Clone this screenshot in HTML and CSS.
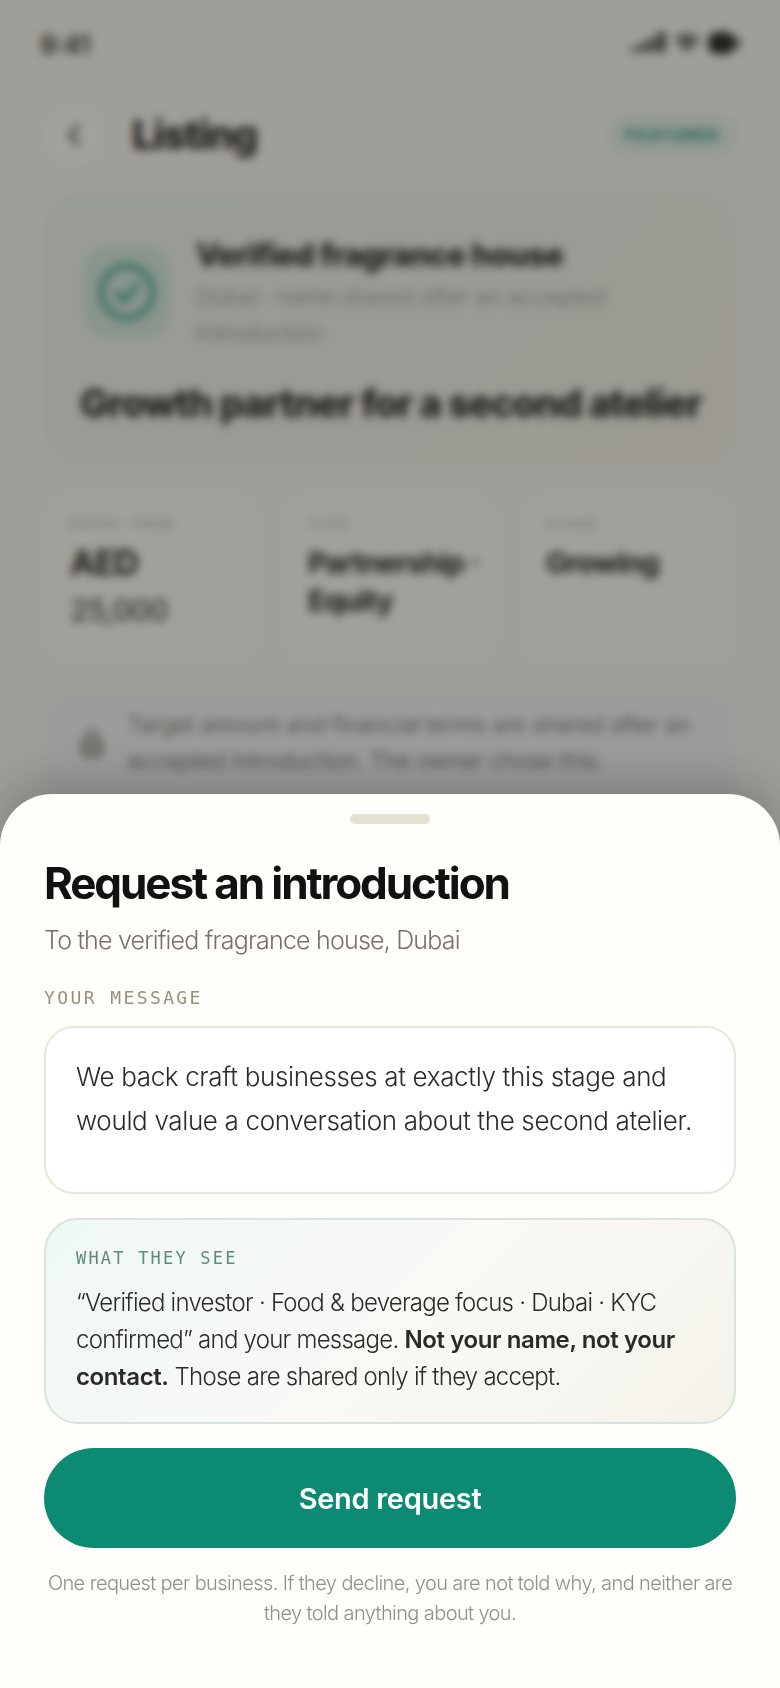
FILE: index.html
```html
<!DOCTYPE html>
<html lang="en">
<head>
<meta charset="utf-8">
<title>Listing</title>
<link rel="stylesheet" href="styles.css">
</head>
<body>
<div class="screen">
  <main class="listing">
    <div class="status">
      <span class="clock">9:41</span>
      <div class="status-icons">
        <svg width="38" height="24" viewBox="0 0 38 24"><path d="M1 21h6v-5H1zM10 21h6v-9h-6zM19 21h6V7h-6zM28 21h7V1h-7z" fill="#1f1f1d"/></svg>
        <svg width="30" height="26" viewBox="0 0 30 26"><path d="M15 23 2 9a18 18 0 0 1 26 0z" fill="#6b6b64"/></svg>
        <svg width="36" height="28" viewBox="0 0 36 28"><rect x="2" y="3" width="27" height="22" rx="9" fill="#151513"/><rect x="30" y="9" width="4" height="10" rx="2" fill="#2a2a27"/></svg>
      </div>
    </div>
    <header class="topbar">
      <div class="back">
        <svg width="18" height="28" viewBox="0 0 18 28"><path d="M13 5 5 14l8 9" fill="none" stroke="#3a3a36" stroke-width="3.4" stroke-linecap="round" stroke-linejoin="round"/></svg>
      </div>
      <h1 class="page-title">Listing</h1>
      <span class="badge">FEATURED</span>
    </header>
    <section class="hero">
      <div class="hero-head">
        <div class="hero-icon">
          <svg width="60" height="60" viewBox="0 0 56 56"><circle cx="28" cy="28" r="24" fill="none" stroke="#259a83" stroke-width="4.5"/><path d="m18 29 7 7 13-15" fill="none" stroke="#259a83" stroke-width="4.5" stroke-linecap="round" stroke-linejoin="round"/></svg>
        </div>
        <div class="hero-copy">
          <h2 class="hero-name">Verified fragrance house</h2>
          <p class="hero-sub">Dubai · name shared after an accepted introduction</p>
        </div>
      </div>
      <h3 class="hero-title">Growth partner for a second atelier</h3>
    </section>
    <section class="stats">
      <div class="stat"><span class="stat-label">ENTRY FROM</span><strong class="stat-value stat-value-lead">AED</strong><span class="stat-extra">25,000</span></div>
      <div class="stat"><span class="stat-label">TYPE</span><strong class="stat-value">Partnership · Equity</strong></div>
      <div class="stat"><span class="stat-label">STAGE</span><strong class="stat-value">Growing</strong></div>
    </section>
    <section class="note">
      <svg width="26" height="34" viewBox="0 0 26 34"><rect x="3" y="13" width="20" height="17" rx="4" fill="#b5b4ad" stroke="#8f8e87" stroke-width="3"/><path d="M8 13V9a5 5 0 0 1 10 0v4" fill="none" stroke="#8f8e87" stroke-width="3"/></svg>
      <p class="note-text">Target amount and financial terms are shared after an accepted introduction. The owner chose this.</p>
    </section>
  </main>
  <div class="scrim"></div>
  <section class="sheet">
    <div class="handle"></div>
    <h2 class="sheet-title">Request an introduction</h2>
    <p class="sheet-sub">To the verified fragrance house, Dubai</p>
    <div class="mono-label">YOUR MESSAGE</div>
    <div class="message">We back craft businesses at exactly this stage and would value a conversation about the second atelier.</div>
    <div class="preview">
      <div class="mono-label preview-label">WHAT THEY SEE</div>
      <p class="preview-text">“Verified investor · Food &amp; beverage focus · Dubai · KYC confirmed” and your message. <strong>Not your name, not your contact.</strong> Those are shared only if they accept.</p>
    </div>
    <button class="send">Send request</button>
    <p class="fineprint">One request per business. If they decline, you are not told why, and neither are they told anything about you.</p>
  </section>
</div>
</body>
</html>
```
FILE: styles.css
```css
* { box-sizing: border-box; }
html, body { margin: 0; padding: 0; }
body { width: 780px; height: 1688px; overflow: hidden; font-family: Inter, "Liberation Sans", sans-serif; background: #f8f6f0; }
h1, h2, h3, p { margin: 0; }

.screen { position: relative; width: 780px; height: 1688px; overflow: hidden; }

/* Listing page behind the sheet */
.listing { padding: 0 44px; color: #0f0f0e; }
.status { height: 90px; display: flex; align-items: center; justify-content: space-between; }
.clock { font-size: 25px; font-weight: 600; color: #1c1c18; margin-left: -4px; }
.status-icons { display: flex; align-items: center; gap: 4px; margin-right: -6px; margin-top: -4px; }
.topbar { display: flex; align-items: center; height: 90px; gap: 28px; }
.back { width: 60px; height: 60px; border-radius: 50%; background: #fcfbf7; display: flex; align-items: center; justify-content: center; }
.page-title { font-size: 40px; font-weight: 800; letter-spacing: -1.4px; flex: 1; margin-top: -2px; }
.badge { height: 42px; padding: 0 18px; border-radius: 21px; background: #e2efe8; color: #0c8a72; font-size: 16px; font-weight: 700; letter-spacing: 1.4px; display: flex; align-items: center; margin-right: -2px; }
.hero { margin-top: 13px; height: 273px; border-radius: 40px; padding: 41px 36px 0; background: linear-gradient(135deg, #ebf1ed, #f1efe6); border: 2px solid #e4e8e0; }
.hero-head { display: flex; gap: 26px; align-items: center; }
.hero-icon { width: 86px; height: 92px; flex: none; margin: -4px 0 0 2px; border-radius: 24px; background: #cfe6dc; display: flex; align-items: center; justify-content: center; }
.hero-name { font-size: 31px; font-weight: 800; letter-spacing: -.6px; }
.hero-sub { font-size: 23.4px; line-height: 36px; color: #a8a69e; margin-top: 6px; letter-spacing: -.5px; width: 430px; }
.hero-title { font-size: 38px; font-weight: 800; letter-spacing: -1px; margin-top: 29px; white-space: nowrap; margin-left: -2px; }
.stats { display: grid; grid-template-columns: repeat(3, 1fr); gap: 22px; margin-top: 28px; }
.stat { height: 170px; padding: 23px 14px 0 26px; border-radius: 28px; background: #fbfaf6; display: flex; flex-direction: column; }
.stat-label { font-family: "Liberation Mono", monospace; font-size: 15px; letter-spacing: 1.4px; color: #a9a79f; }
.stat-value { font-size: 29px; font-weight: 700; line-height: 38px; margin-top: 10px; letter-spacing: -.9px; }
.stat-value-lead { font-size: 34px; }
.stat-extra { font-size: 30px; font-weight: 500; color: #3c3b36; line-height: 56px; letter-spacing: -.8px; }
.note { margin-top: 28px; display: flex; align-items: center; gap: 22px; padding: 0 32px 29px 35px; height: 130px; border-radius: 28px; background: #f3f3f5; }
.note svg { flex: none; }
.note-text { font-size: 23.5px; line-height: 36px; color: #77766f; letter-spacing: -.6px; }

/* Dimmed, blurred layer over the page */
.scrim { position: absolute; inset: 0; background: rgba(48, 46, 40, .44); backdrop-filter: blur(5px); }

/* Bottom sheet */
.sheet { position: absolute; left: 0; right: 0; bottom: 0; height: 894px; background: #fffefa; border-radius: 52px 52px 0 0; padding: 20px 44px 0; box-shadow: 0 -14px 40px rgba(30, 30, 30, .22); }
.handle { width: 80px; height: 10px; border-radius: 5px; background: #e4e0d2; margin: 0 auto; }
.sheet-title { font-size: 44px; line-height: 52px; font-weight: 700; color: #111110; letter-spacing: -2.1px; margin-top: 33px; }
.sheet-sub { font-size: 25px; line-height: 36px; font-weight: 300; color: #7a706a; margin-top: 13px; letter-spacing: -.8px; }
.mono-label { font-family: "DejaVu Sans Mono", "Liberation Mono", monospace; font-size: 18px; line-height: 24px; letter-spacing: 2.4px; color: #99917f; margin-top: 28px; }
.message { margin-top: 16px; height: 168px; padding: 27px 30px; background: #fff; border: 2px solid #e9e6da; border-radius: 30px; font-size: 26px; line-height: 44px; font-weight: 300; color: #2a2a28; letter-spacing: -.35px; }
.preview { margin-top: 24px; height: 206px; padding: 26px 30px; border: 2px solid #d5e4dc; border-radius: 34px; background: linear-gradient(135deg, #eff8f4 0%, #f9f9f6 50%, #f5f2ea 100%); }
.preview-label { color: #5f8a7a; margin-top: 0; font-size: 17px; letter-spacing: 2.2px; }
.preview-text { margin-top: 14px; font-size: 24px; line-height: 37px; font-weight: 300; color: #2a2a28; letter-spacing: -.75px; }
.preview-text strong { font-weight: 600; letter-spacing: -.4px; }
.send { display: block; width: 692px; height: 100px; margin-top: 24px; border: 0; border-radius: 50px; background: #0c8a72; color: #fff; font: 600 29px Inter, "Liberation Sans", sans-serif; letter-spacing: -.3px; }
.fineprint { margin-top: 20px; text-align: center; font-size: 20px; line-height: 30px; font-weight: 300; color: #948f85; letter-spacing: -.6px; }
```
